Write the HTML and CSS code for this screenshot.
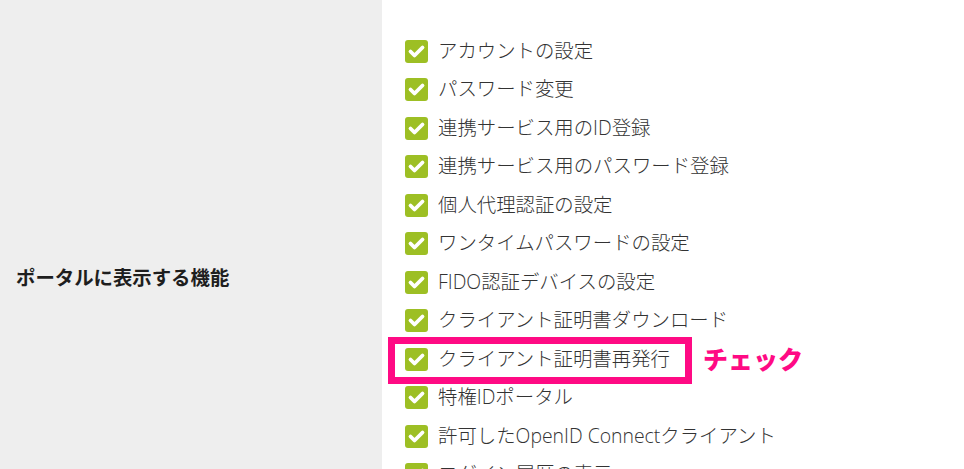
FILE: index.html
```html
<!DOCTYPE html>
<html lang="ja">
<head>
<meta charset="utf-8">
<title>ポータルに表示する機能</title>
<link rel="stylesheet" href="styles.css">
</head>
<body>
<div class="row">
  <div class="label-cell">ポータルに表示する機能</div>
  <div class="value-cell">
    <ul class="checks">
      <li class="check"><span class="box"><svg viewBox="0 0 23 23"><polyline points="5.5,11.5 9.5,15.5 17.5,7.5"/></svg></span><span class="txt">アカウントの設定</span></li>
      <li class="check"><span class="box"><svg viewBox="0 0 23 23"><polyline points="5.5,11.5 9.5,15.5 17.5,7.5"/></svg></span><span class="txt">パスワード変更</span></li>
      <li class="check"><span class="box"><svg viewBox="0 0 23 23"><polyline points="5.5,11.5 9.5,15.5 17.5,7.5"/></svg></span><span class="txt">連携サービス用のID登録</span></li>
      <li class="check"><span class="box"><svg viewBox="0 0 23 23"><polyline points="5.5,11.5 9.5,15.5 17.5,7.5"/></svg></span><span class="txt">連携サービス用のパスワード登録</span></li>
      <li class="check"><span class="box"><svg viewBox="0 0 23 23"><polyline points="5.5,11.5 9.5,15.5 17.5,7.5"/></svg></span><span class="txt">個人代理認証の設定</span></li>
      <li class="check"><span class="box"><svg viewBox="0 0 23 23"><polyline points="5.5,11.5 9.5,15.5 17.5,7.5"/></svg></span><span class="txt">ワンタイムパスワードの設定</span></li>
      <li class="check"><span class="box"><svg viewBox="0 0 23 23"><polyline points="5.5,11.5 9.5,15.5 17.5,7.5"/></svg></span><span class="txt">FIDO認証デバイスの設定</span></li>
      <li class="check"><span class="box"><svg viewBox="0 0 23 23"><polyline points="5.5,11.5 9.5,15.5 17.5,7.5"/></svg></span><span class="txt">クライアント証明書ダウンロード</span></li>
      <li class="check highlighted"><span class="box"><svg viewBox="0 0 23 23"><polyline points="5.5,11.5 9.5,15.5 17.5,7.5"/></svg></span><span class="txt">クライアント証明書再発行</span><span class="note">チェック</span></li>
      <li class="check"><span class="box"><svg viewBox="0 0 23 23"><polyline points="5.5,11.5 9.5,15.5 17.5,7.5"/></svg></span><span class="txt">特権IDポータル</span></li>
      <li class="check"><span class="box"><svg viewBox="0 0 23 23"><polyline points="5.5,11.5 9.5,15.5 17.5,7.5"/></svg></span><span class="txt">許可したOpenID Connectクライアント</span></li>
      <li class="check"><span class="box"><svg viewBox="0 0 23 23"><polyline points="5.5,11.5 9.5,15.5 17.5,7.5"/></svg></span><span class="txt">ログイン履歴の表示</span></li>
    </ul>
  </div>
</div>
</body>
</html>
```

FILE: styles.css
```css
html, body {
  margin: 0;
  padding: 0;
  overflow: hidden;
  background: #ffffff;
}

body {
  font-family: "Open Sans", "Noto Sans CJK JP", sans-serif;
  color: #333333;
}

.row {
  display: flex;
  height: 552px;
}

.label-cell {
  width: 382px;
  flex: none;
  background: #eeeeee;
  display: flex;
  align-items: center;
  padding-left: 16px;
  box-sizing: border-box;
  font-family: "Noto Sans CJK JP", sans-serif;
  font-size: 19.4px;
  font-weight: bold;
  color: #1e1e1e;
}

.value-cell {
  flex: 1;
  padding-left: 23px;
  padding-top: 32px;
}

.checks {
  list-style: none;
  margin: 0;
  padding: 0;
}

.check {
  display: flex;
  align-items: center;
  height: 38.5px;
  gap: 10px;
  font-size: 19.4px;
  font-weight: 300;
  line-height: 1;
  position: relative;
}

.box {
  width: 23px;
  height: 23px;
  flex: none;
  border-radius: 3px;
  background: #9dbf24;
  display: block;
}

.box svg {
  display: block;
  width: 23px;
  height: 23px;
}

.box polyline {
  fill: none;
  stroke: #ffffff;
  stroke-width: 3.8;
  stroke-linecap: round;
  stroke-linejoin: round;
}

.txt {
  white-space: nowrap;
  position: relative;
  top: -1px;
}

.highlighted::before {
  content: "";
  position: absolute;
  left: -17px;
  top: -3px;
  width: 304px;
  height: 47px;
  box-sizing: border-box;
  border: 7px solid #ff0a84;
}

.note {
  position: absolute;
  left: 298px;
  top: 6px;
  font-family: "Noto Sans CJK JP", sans-serif;
  font-size: 25px;
  font-weight: 900;
  color: #ff0a84;
  white-space: nowrap;
}
```
